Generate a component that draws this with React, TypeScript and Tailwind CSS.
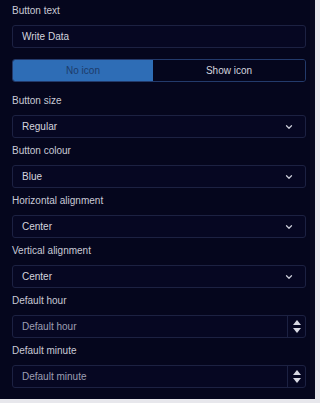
import { ChevronDown } from 'lucide-react';

const font = { fontFamily: '"Liberation Sans", Arial, sans-serif' };

function Label({ children }: { children: string }) {
  return <div className="text-[10px] leading-[14px] text-[#c9cad6] mb-[7px]">{children}</div>;
}

function Select({ value }: { value: string }) {
  return (
    <div className="h-[23px] flex items-center justify-between rounded-[3px] border border-[#1c2142] bg-[#060722] pl-[9px] pr-[11px]">
      <span className="text-[10px] text-[#d4d5df]">{value}</span>
      <ChevronDown className="w-[10px] h-[10px] text-[#c9cad6]" strokeWidth={3} />
    </div>
  );
}

function NumberInput({ placeholder }: { placeholder: string }) {
  return (
    <div className="h-[23px] flex items-stretch rounded-[3px] border border-[#1c2142] bg-[#060722]">
      <span className="flex-1 flex items-center pl-[9px] text-[10px] text-[#9d9fb3]">{placeholder}</span>
      <div className="w-[18px] border-l border-[#1c2142] flex flex-col items-center justify-center gap-[3px]">
        <svg width="8" height="5" viewBox="0 0 8 5">
          <path d="M4 0 L8 5 L0 5 Z" fill="#d9dae4" />
        </svg>
        <svg width="8" height="5" viewBox="0 0 8 5">
          <path d="M0 0 L8 0 L4 5 Z" fill="#d9dae4" />
        </svg>
      </div>
    </div>
  );
}

export default function App() {
  const selects = [
    { label: 'Button size', value: 'Regular' },
    { label: 'Button colour', value: 'Blue' },
    { label: 'Horizontal alignment', value: 'Center' },
    { label: 'Vertical alignment', value: 'Center' },
  ];

  return (
    <div className="w-[320px] h-[403px] bg-[#e7e7ec]" style={font}>
      <div className="w-[315px] h-[399px] bg-[#05061d] pt-[4px] pl-[12px] pr-[9px]">
        <div>
          <Label>Button text</Label>
          <div className="h-[23px] flex items-center rounded-[3px] border border-[#1c2142] bg-[#060722] pl-[9px]">
            <span className="text-[10px] text-[#d4d5df]">Write Data</span>
          </div>
        </div>

        <div className="mt-[11px] mb-[12px] h-[23px] flex rounded-[3px] border border-[#233a6b] overflow-hidden">
          <button className="w-[140px] bg-[#2e6db6] text-[10px] text-[#1d3b6a]">No icon</button>
          <button className="flex-1 bg-[#05061d] text-[10px] text-[#d4d5df]">Show icon</button>
        </div>

        <div className="flex flex-col gap-[6px]">
          {selects.map((s, i) => (
            <div key={i}>
              <Label>{s.label}</Label>
              <Select value={s.value} />
            </div>
          ))}
          <div>
            <Label>Default hour</Label>
            <NumberInput placeholder="Default hour" />
          </div>
          <div>
            <Label>Default minute</Label>
            <NumberInput placeholder="Default minute" />
          </div>
        </div>
      </div>
    </div>
  );
}
